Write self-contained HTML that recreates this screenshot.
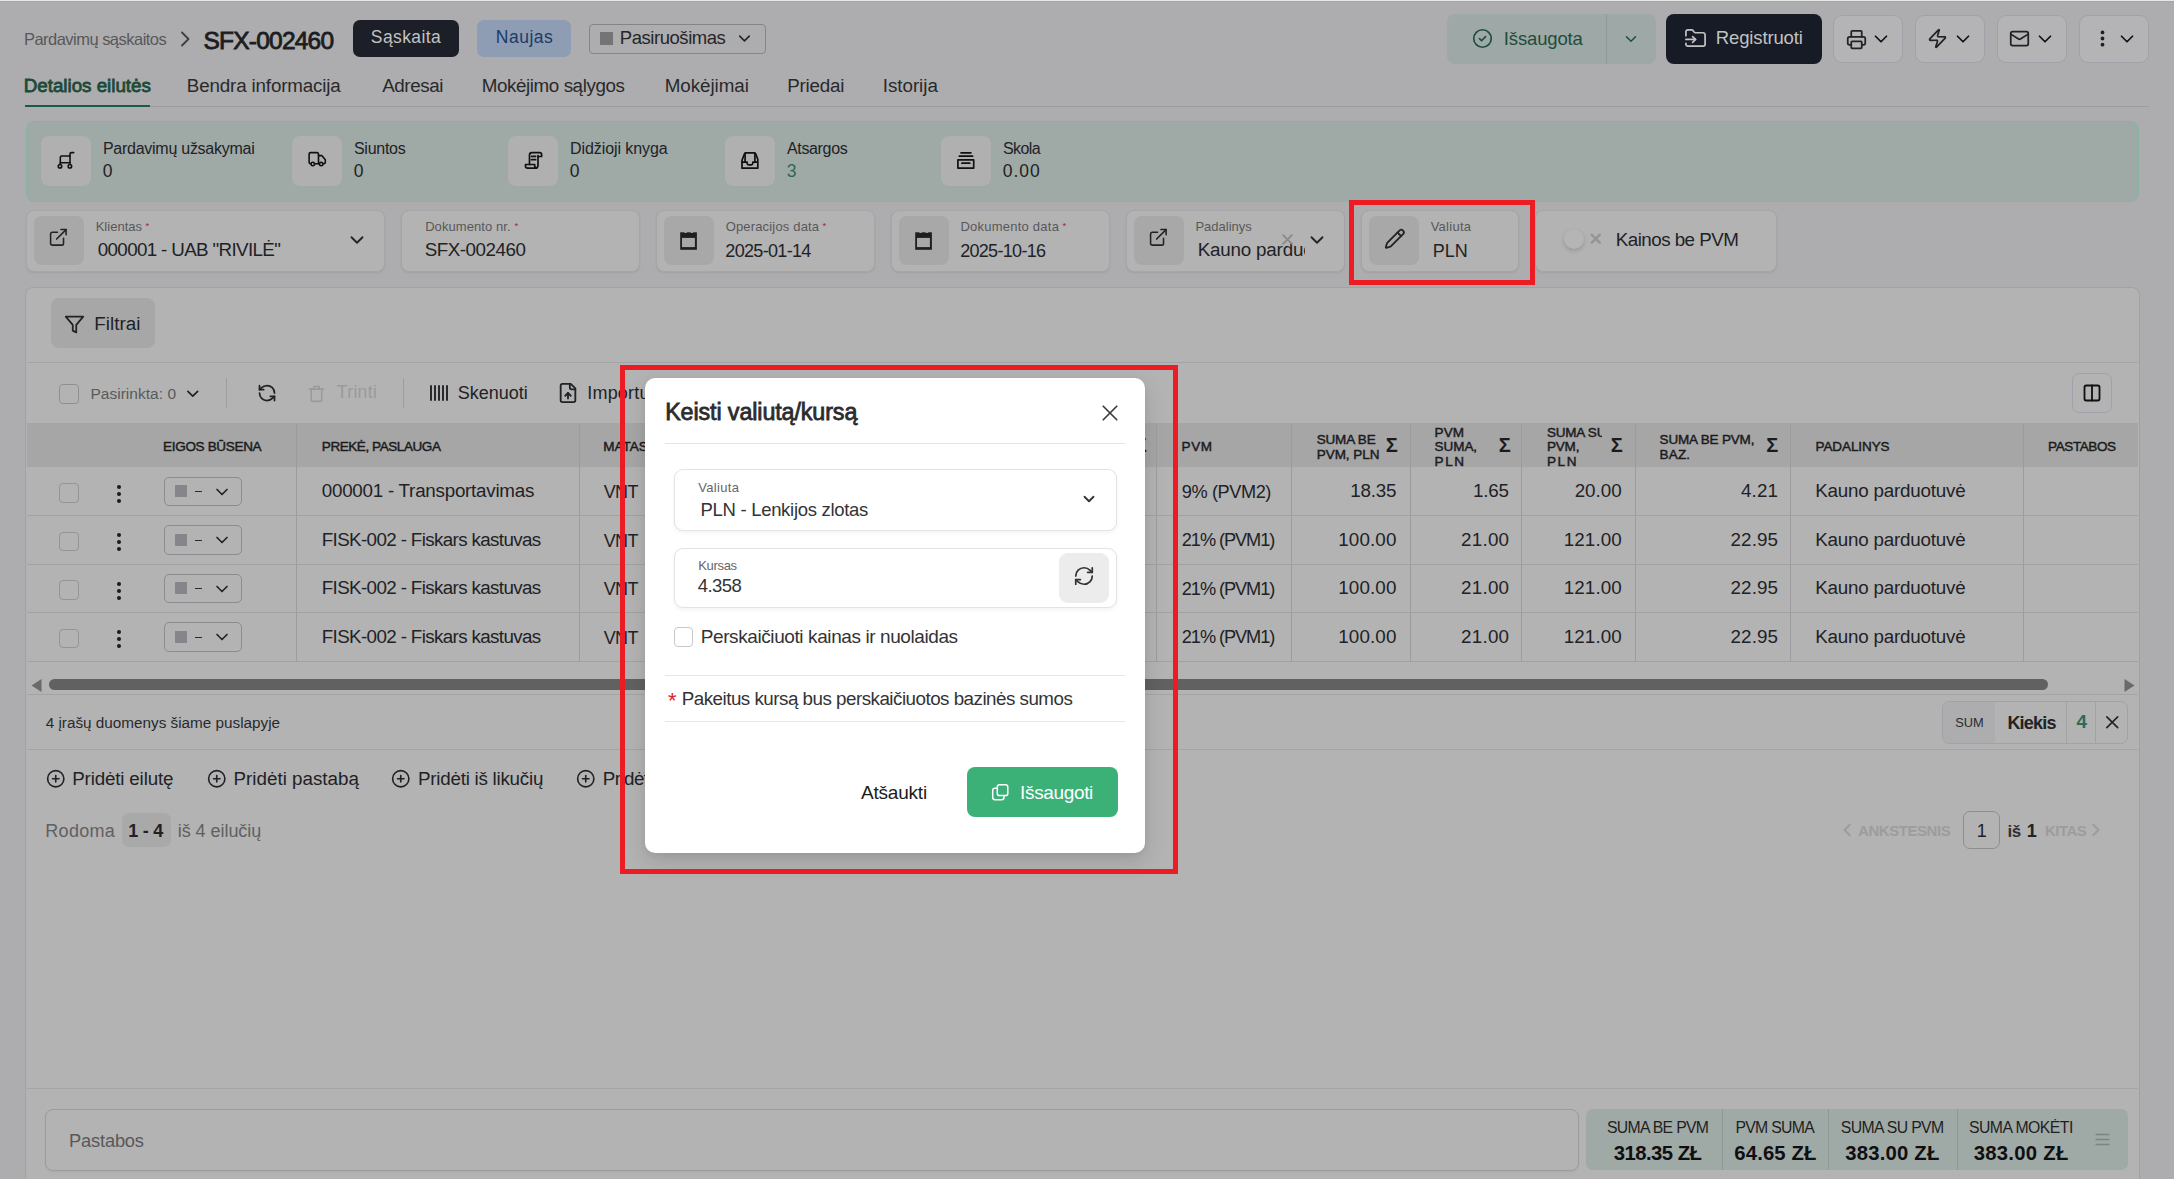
<!DOCTYPE html>
<html><head><meta charset="utf-8"><title>Rivilė</title>
<style>
html,body{margin:0;padding:0;width:2174px;height:1179px;overflow:hidden;background:#adadaf;}
body{position:relative;font-family:"Liberation Sans",sans-serif;}
.a{position:absolute;}
.t{white-space:nowrap;}
svg.a{overflow:visible;}
</style></head><body>
<div class="a" style="left:0px;top:0px;width:2174px;height:1px;background:#e6e8e6;"></div>
<div class="a" style="left:0px;top:1px;width:2174px;height:1px;background:#a6a6a8;"></div>
<span class="a t" id="t0" style="top:31.13px;font-size:16.5px;line-height:16.5px;color:#58585a;letter-spacing:-0.523px;left:23.93px;">Pardavimų sąskaitos</span>
<svg class="a" style="left:176.5px;top:30.5px;" width="16" height="16" viewBox="0 0 16 16" fill="none" stroke="#3e3e40" stroke-width="1.8" stroke-linecap="round" stroke-linejoin="round"><path d="M5 1.5 11.5 8 5 14.5"/></svg>
<span class="a t" id="t1" style="top:29.36px;font-size:24.5px;line-height:24.5px;color:#1d1d1f;letter-spacing:-0.763px;left:203.41px;-webkit-text-stroke:0.85px #1d1d1f;">SFX-002460</span>
<div class="a" style="left:353px;top:20px;width:106px;height:36.5px;background:#1c1f27;border-radius:7px;"></div>
<span class="a t" id="t2" style="top:29.48px;font-size:17.5px;line-height:17.5px;color:#c2c2c2;letter-spacing:0.400px;left:370.86px;">Sąskaita</span>
<div class="a" style="left:477px;top:20px;width:94px;height:36.5px;background:#8e9db4;border-radius:7px;"></div>
<span class="a t" id="t3" style="top:29.48px;font-size:17.5px;line-height:17.5px;color:#1d3a68;letter-spacing:0.488px;left:495.86px;">Naujas</span>
<div class="a" style="left:589px;top:24px;width:177px;height:29.5px;border:1px solid #858587;box-sizing:border-box;border-radius:4px;"></div>
<div class="a" style="left:600px;top:32px;width:13px;height:13px;background:#747476;"></div>
<span class="a t" id="t4" style="top:28.64px;font-size:18.5px;line-height:18.5px;color:#262628;letter-spacing:-0.456px;left:619.80px;">Pasiruošimas</span>
<svg class="a" style="left:735px;top:29px;" width="19" height="19" viewBox="0 0 24 24" fill="none" stroke="#262628" stroke-width="2" stroke-linecap="round" stroke-linejoin="round"><path d="m6 9 6 6 6-6"/></svg>
<div class="a" style="left:1447px;top:14px;width:209px;height:49.5px;background:#9ea8a6;border-radius:8px;"></div>
<div class="a" style="left:1606px;top:14px;width:1px;height:49.5px;background:#8f9a97;"></div>
<svg class="a" style="left:1472px;top:28px;" width="21" height="21" viewBox="0 0 24 24" fill="none" stroke="#1f4d3c" stroke-width="1.9" stroke-linecap="round" stroke-linejoin="round"><circle cx="12" cy="12" r="10"/><path d="m8.5 12.2 2.4 2.4 4.6-4.8"/></svg>
<span class="a t" id="t5" style="top:29.84px;font-size:18.5px;line-height:18.5px;color:#1f4d3c;letter-spacing:-0.150px;left:1503.80px;">Išsaugota</span>
<svg class="a" style="left:1622px;top:30px;" width="18" height="18" viewBox="0 0 24 24" fill="none" stroke="#1f4d3c" stroke-width="2" stroke-linecap="round" stroke-linejoin="round"><path d="m6 9 6 6 6-6"/></svg>
<div class="a" style="left:1666px;top:14px;width:156px;height:49.5px;background:#161b26;border-radius:8px;"></div>
<svg class="a" style="left:1684px;top:27px;" width="23" height="23" viewBox="0 0 24 24" fill="none" stroke="#c2c2c2" stroke-width="1.8" stroke-linecap="round" stroke-linejoin="round"><path d="M2 9V5a2 2 0 0 1 2-2h3.9a2 2 0 0 1 1.69.9l.81 1.2a2 2 0 0 0 1.67.9H20a2 2 0 0 1 2 2v10a2 2 0 0 1-2 2H4a2 2 0 0 1-2-2v-1"/><path d="M2 13h10"/><path d="m9 16 3-3-3-3"/></svg>
<span class="a t" id="t6" style="top:29.44px;font-size:18.5px;line-height:18.5px;color:#c2c2c2;letter-spacing:-0.140px;left:1715.80px;">Registruoti</span>
<div class="a" style="left:1833px;top:14.5px;width:70px;height:48.5px;background:#b4b4b6;border:1px solid #9fa2a8;box-sizing:border-box;border-radius:9px;"></div>
<svg class="a" style="left:1870px;top:27.7px;" width="22" height="22" viewBox="0 0 24 24" fill="none" stroke="#111113" stroke-width="1.9" stroke-linecap="round" stroke-linejoin="round"><path d="m6 9 6 6 6-6"/></svg>
<div class="a" style="left:1915px;top:14.5px;width:70px;height:48.5px;background:#b4b4b6;border:1px solid #9fa2a8;box-sizing:border-box;border-radius:9px;"></div>
<svg class="a" style="left:1952px;top:27.7px;" width="22" height="22" viewBox="0 0 24 24" fill="none" stroke="#111113" stroke-width="1.9" stroke-linecap="round" stroke-linejoin="round"><path d="m6 9 6 6 6-6"/></svg>
<div class="a" style="left:1997px;top:14.5px;width:70px;height:48.5px;background:#b4b4b6;border:1px solid #9fa2a8;box-sizing:border-box;border-radius:9px;"></div>
<svg class="a" style="left:2034px;top:27.7px;" width="22" height="22" viewBox="0 0 24 24" fill="none" stroke="#111113" stroke-width="1.9" stroke-linecap="round" stroke-linejoin="round"><path d="m6 9 6 6 6-6"/></svg>
<div class="a" style="left:2079px;top:14.5px;width:70px;height:48.5px;background:#b4b4b6;border:1px solid #9fa2a8;box-sizing:border-box;border-radius:9px;"></div>
<svg class="a" style="left:2116px;top:27.7px;" width="22" height="22" viewBox="0 0 24 24" fill="none" stroke="#111113" stroke-width="1.9" stroke-linecap="round" stroke-linejoin="round"><path d="m6 9 6 6 6-6"/></svg>
<svg class="a" style="left:1845.5px;top:29px;" width="21" height="21" viewBox="0 0 24 24" fill="none" stroke="#212226" stroke-width="2" stroke-linecap="round" stroke-linejoin="round"><path d="M6 18H4a2 2 0 0 1-2-2v-5a2 2 0 0 1 2-2h16a2 2 0 0 1 2 2v5a2 2 0 0 1-2 2h-2"/><path d="M6 9V3a1 1 0 0 1 1-1h10a1 1 0 0 1 1 1v6"/><rect x="6" y="14" width="12" height="8" rx="1"/></svg>
<svg class="a" style="left:1927px;top:28px;" width="21" height="21" viewBox="0 0 24 24" fill="none" stroke="#212226" stroke-width="2" stroke-linecap="round" stroke-linejoin="round"><path d="M4 14a1 1 0 0 1-.78-1.63l9.9-10.2a.5.5 0 0 1 .86.46l-1.92 6.02A1 1 0 0 0 13 10h7a1 1 0 0 1 .78 1.63l-9.9 10.2a.5.5 0 0 1-.86-.46l1.92-6.02A1 1 0 0 0 11 14z"/></svg>
<svg class="a" style="left:2009px;top:28px;" width="21" height="21" viewBox="0 0 24 24" fill="none" stroke="#212226" stroke-width="2" stroke-linecap="round" stroke-linejoin="round"><rect width="20" height="16" x="2" y="4" rx="2"/><path d="m22 7-8.97 5.7a1.94 1.94 0 0 1-2.06 0L2 7"/></svg>
<svg class="a" style="left:2092px;top:28px;" width="21" height="21" viewBox="0 0 24 24" fill="none" stroke="#212226" stroke-width="2" stroke-linecap="round" stroke-linejoin="round"><circle cx="12" cy="5" r="1.2" fill="#1b1b1d"/><circle cx="12" cy="12" r="1.2" fill="#1b1b1d"/><circle cx="12" cy="19" r="1.2" fill="#1b1b1d"/></svg>
<div class="a" style="left:25px;top:106px;width:2124px;height:1px;background:#9c9c9e;"></div>
<div class="a" style="left:25px;top:104.8px;width:125px;height:2.2px;background:#1e5a42;"></div>
<span class="a t" id="t7" style="top:76.98px;font-size:18.8px;line-height:18.8px;color:#1c4a37;letter-spacing:-0.020px;left:23.78px;-webkit-text-stroke:0.8px #1c4a37;">Detalios eilutės</span>
<span class="a t" id="t8" style="top:76.98px;font-size:18.8px;line-height:18.8px;color:#29292b;letter-spacing:-0.149px;left:186.78px;">Bendra informacija</span>
<span class="a t" id="t9" style="top:76.98px;font-size:18.8px;line-height:18.8px;color:#29292b;letter-spacing:-0.437px;left:382.28px;">Adresai</span>
<span class="a t" id="t10" style="top:76.98px;font-size:18.8px;line-height:18.8px;color:#29292b;letter-spacing:-0.413px;left:481.78px;">Mokėjimo sąlygos</span>
<span class="a t" id="t11" style="top:76.98px;font-size:18.8px;line-height:18.8px;color:#29292b;letter-spacing:-0.060px;left:664.78px;">Mokėjimai</span>
<span class="a t" id="t12" style="top:76.98px;font-size:18.8px;line-height:18.8px;color:#29292b;letter-spacing:-0.233px;left:787.28px;">Priedai</span>
<span class="a t" id="t13" style="top:76.98px;font-size:18.8px;line-height:18.8px;color:#29292b;letter-spacing:-0.037px;left:882.78px;">Istorija</span>
<div class="a" style="left:25.5px;top:120.5px;width:2113.5px;height:81px;background:#9fa9a6;border:1px solid #88b3a2;box-sizing:border-box;border-radius:8px;"></div>
<div class="a" style="left:41px;top:136px;width:50px;height:50px;background:#b0b0b0;border-radius:8px;"></div>
<span class="a t" id="t14" style="top:140.85px;font-size:16px;line-height:16px;color:#212226;letter-spacing:-0.263px;left:102.96px;">Pardavimų užsakymai</span>
<span class="a t" id="t15" style="top:162.68px;font-size:17.5px;line-height:17.5px;color:#212226;left:102.86px;">0</span>
<div class="a" style="left:292px;top:136px;width:50px;height:50px;background:#b0b0b0;border-radius:8px;"></div>
<span class="a t" id="t16" style="top:140.85px;font-size:16px;line-height:16px;color:#212226;letter-spacing:-0.269px;left:353.96px;">Siuntos</span>
<span class="a t" id="t17" style="top:162.68px;font-size:17.5px;line-height:17.5px;color:#212226;left:353.86px;">0</span>
<div class="a" style="left:508px;top:136px;width:50px;height:50px;background:#b0b0b0;border-radius:8px;"></div>
<span class="a t" id="t18" style="top:140.85px;font-size:16px;line-height:16px;color:#212226;letter-spacing:-0.074px;left:569.96px;">Didžioji knyga</span>
<span class="a t" id="t19" style="top:162.68px;font-size:17.5px;line-height:17.5px;color:#212226;left:569.86px;">0</span>
<div class="a" style="left:725px;top:136px;width:50px;height:50px;background:#b0b0b0;border-radius:8px;"></div>
<span class="a t" id="t20" style="top:140.85px;font-size:16px;line-height:16px;color:#212226;letter-spacing:-0.340px;left:786.96px;">Atsargos</span>
<span class="a t" id="t21" style="top:162.68px;font-size:17.5px;line-height:17.5px;color:#2b6b58;left:786.86px;">3</span>
<div class="a" style="left:941px;top:136px;width:50px;height:50px;background:#b0b0b0;border-radius:8px;"></div>
<span class="a t" id="t22" style="top:140.85px;font-size:16px;line-height:16px;color:#212226;letter-spacing:-0.568px;left:1002.96px;">Skola</span>
<span class="a t" id="t23" style="top:162.68px;font-size:17.5px;line-height:17.5px;color:#212226;letter-spacing:0.954px;left:1002.86px;">0.00</span>
<svg class="a" style="left:41px;top:136px;" width="50" height="50" viewBox="0 0 50 50" fill="none" stroke="#111113" stroke-width="1.6" stroke-linecap="round" stroke-linejoin="round"><path d="M32.7 16.6h-2.2a1.5 1.5 0 0 0-1.5 1.5V27.2"/><path d="M29 20H20.8a1.5 1.5 0 0 0-1.5 1.5V28.3"/><path d="M19.3 26.7H29"/><circle cx="19" cy="30.2" r="1.75"/><circle cx="28.9" cy="30.2" r="1.75"/></svg>
<svg class="a" style="left:292px;top:136px;" width="50" height="50" viewBox="0 0 50 50" fill="none" stroke="#111113" stroke-width="1.6" stroke-linecap="round" stroke-linejoin="round"><path d="M19 27.8h-0.4a1.5 1.5 0 0 1-1.5-1.5V18.2a1.6 1.6 0 0 1 1.6-1.6h6.3a1.5 1.5 0 0 1 1.5 1.5V27.8h0.8"/><path d="M22.6 27.8h4.9"/><path d="M26.5 19.6h3.3l3.5 4.2v2.6a1.5 1.5 0 0 1-1.4 1.4h-1"/><circle cx="20.8" cy="28" r="1.7"/><circle cx="29.2" cy="28" r="1.7"/></svg>
<svg class="a" style="left:508px;top:136px;" width="50" height="50" viewBox="0 0 50 50" fill="none" stroke="#111113" stroke-width="1.7" stroke-linecap="round" stroke-linejoin="round"><path d="M21.5 28.5V19a2.4 2.4 0 0 1 2.4-2.4H32a1.6 1.6 0 0 1 1.6 1.6v2.3H30.2"/><path d="M30 19.5v10.2a2.4 2.4 0 0 1-2.4 2.4H19.6a2.1 2.1 0 0 1-2.1-2.1v-1.5h9.2v1.2a2.3 2.3 0 0 0 2.2 2.4"/><path d="M23.6 20.3h4"/><path d="M23.6 23.7h4"/></svg>
<svg class="a" style="left:725px;top:136px;" width="50" height="50" viewBox="0 0 50 50" fill="none" stroke="#111113" stroke-width="1.7" stroke-linecap="round" stroke-linejoin="round"><path d="M17 32.2V24.2l2.5-6.3a1.6 1.6 0 0 1 1.5-1.1h8.2a1.6 1.6 0 0 1 1.5 1.1l2.1 5.3V32.2Z"/><path d="M20.1 17.2v9H17"/><path d="M29.9 17.2v9h2.4"/><path d="M20.1 26.2h2v1.1a1.6 1.6 0 0 0 1.6 1.6h2.5a1.6 1.6 0 0 0 1.6-1.6v-1.1h2.1"/></svg>
<svg class="a" style="left:941px;top:136px;" width="50" height="50" viewBox="0 0 50 50" fill="none" stroke="#111113" stroke-width="1.7" stroke-linecap="round" stroke-linejoin="round"><path d="M20 16.8h9.9"/><path d="M18.3 20.2h13.3"/><rect x="16.9" y="23.9" width="15.8" height="8.2"/><path d="M20.9 27.2h7.9"/></svg>
<div class="a" style="left:25.5px;top:209.5px;width:359px;height:62px;background:#b3b3b3;border:1px solid #a6a6a8;box-sizing:border-box;border-radius:8px;box-shadow:0 1px 2px rgba(0,0,0,0.08);"></div>
<div class="a" style="left:34px;top:215.5px;width:50px;height:49px;background:#a8a8a8;border-radius:8px;"></div>
<svg class="a" style="left:48.4px;top:227.4px;" width="20.7" height="20.7" viewBox="0 0 24 24" fill="none" stroke="#222224" stroke-width="1.8" stroke-linecap="round" stroke-linejoin="round"><path d="M15 3h6v6"/><path d="M10 14 21 3"/><path d="M18 13v6a2 2 0 0 1-2 2H5a2 2 0 0 1-2-2V8a2 2 0 0 1 2-2h6"/></svg>
<span class="a t" id="t24" style="top:220.09px;font-size:13px;line-height:13px;color:#58585a;letter-spacing:0.026px;left:95.66px;">Klientas</span>
<span class="a t" id="t25" style="top:220.86px;font-size:9.5px;line-height:9.5px;color:#a8233f;left:145.38px;">*</span>
<span class="a t" id="t26" style="top:240.98px;font-size:18.8px;line-height:18.8px;color:#212226;letter-spacing:-0.648px;left:97.78px;">000001 - UAB "RIVILĖ"</span>
<svg class="a" style="left:345.5px;top:229.3px;" width="22" height="22" viewBox="0 0 24 24" fill="none" stroke="#212226" stroke-width="2" stroke-linecap="round" stroke-linejoin="round"><path d="m6 9 6 6 6-6"/></svg>
<div class="a" style="left:400.5px;top:209.5px;width:239px;height:62px;background:#b3b3b3;border:1px solid #a6a6a8;box-sizing:border-box;border-radius:8px;box-shadow:0 1px 2px rgba(0,0,0,0.08);"></div>
<span class="a t" id="t27" style="top:220.09px;font-size:13px;line-height:13px;color:#58585a;letter-spacing:0.074px;left:425.15px;">Dokumento nr.</span>
<span class="a t" id="t28" style="top:220.86px;font-size:9.5px;line-height:9.5px;color:#a8233f;left:514.38px;">*</span>
<span class="a t" id="t29" style="top:240.98px;font-size:18.8px;line-height:18.8px;color:#212226;letter-spacing:-0.487px;left:424.78px;">SFX-002460</span>
<div class="a" style="left:655.5px;top:209.5px;width:219px;height:62px;background:#b3b3b3;border:1px solid #a6a6a8;box-sizing:border-box;border-radius:8px;box-shadow:0 1px 2px rgba(0,0,0,0.08);"></div>
<div class="a" style="left:664px;top:215.5px;width:50px;height:49px;background:#a8a8a8;border-radius:8px;"></div>
<svg class="a" style="left:664px;top:215.5px;" width="50" height="50" viewBox="0 0 50 50" fill="none" stroke="none" stroke-width="0" stroke-linecap="round" stroke-linejoin="round"><rect x="16.2" y="16.3" width="16.7" height="17.5" fill="#1e1f22" stroke="none"/><rect x="18" y="21.9" width="12.9" height="9.2" fill="#a8a8a8" stroke="none"/><rect x="20.4" y="16.1" width="2.4" height="0.9" fill="#a8a8a8" stroke="none"/><rect x="26.6" y="16.1" width="2.5" height="0.9" fill="#a8a8a8" stroke="none"/></svg>
<span class="a t" id="t30" style="top:220.09px;font-size:13px;line-height:13px;color:#58585a;letter-spacing:0.169px;left:725.65px;">Operacijos data</span>
<span class="a t" id="t31" style="top:220.86px;font-size:9.5px;line-height:9.5px;color:#a8233f;left:822.38px;">*</span>
<span class="a t" id="t32" style="top:241.66px;font-size:18px;line-height:18px;color:#212226;letter-spacing:-0.678px;left:725.33px;">2025-01-14</span>
<div class="a" style="left:890.5px;top:209.5px;width:219px;height:62px;background:#b3b3b3;border:1px solid #a6a6a8;box-sizing:border-box;border-radius:8px;box-shadow:0 1px 2px rgba(0,0,0,0.08);"></div>
<div class="a" style="left:899px;top:215.5px;width:50px;height:49px;background:#a8a8a8;border-radius:8px;"></div>
<svg class="a" style="left:899px;top:215.5px;" width="50" height="50" viewBox="0 0 50 50" fill="none" stroke="none" stroke-width="0" stroke-linecap="round" stroke-linejoin="round"><rect x="16.2" y="16.3" width="16.7" height="17.5" fill="#1e1f22" stroke="none"/><rect x="18" y="21.9" width="12.9" height="9.2" fill="#a8a8a8" stroke="none"/><rect x="20.4" y="16.1" width="2.4" height="0.9" fill="#a8a8a8" stroke="none"/><rect x="26.6" y="16.1" width="2.5" height="0.9" fill="#a8a8a8" stroke="none"/></svg>
<span class="a t" id="t33" style="top:220.09px;font-size:13px;line-height:13px;color:#58585a;letter-spacing:0.233px;left:960.45px;">Dokumento data</span>
<span class="a t" id="t34" style="top:220.86px;font-size:9.5px;line-height:9.5px;color:#a8233f;left:1062.38px;">*</span>
<span class="a t" id="t35" style="top:241.66px;font-size:18px;line-height:18px;color:#212226;letter-spacing:-0.678px;left:960.13px;">2025-10-16</span>
<div class="a" style="left:1125.5px;top:209.5px;width:219px;height:62px;background:#b3b3b3;border:1px solid #a6a6a8;box-sizing:border-box;border-radius:8px;box-shadow:0 1px 2px rgba(0,0,0,0.08);"></div>
<div class="a" style="left:1134px;top:215.5px;width:50px;height:49px;background:#a8a8a8;border-radius:8px;"></div>
<svg class="a" style="left:1148.4px;top:227.4px;" width="20.7" height="20.7" viewBox="0 0 24 24" fill="none" stroke="#222224" stroke-width="1.8" stroke-linecap="round" stroke-linejoin="round"><path d="M15 3h6v6"/><path d="M10 14 21 3"/><path d="M18 13v6a2 2 0 0 1-2 2H5a2 2 0 0 1-2-2V8a2 2 0 0 1 2-2h6"/></svg>
<span class="a t" id="t36" style="top:220.09px;font-size:13px;line-height:13px;color:#58585a;letter-spacing:0.007px;left:1195.45px;">Padalinys</span>
<div class="a" style="left:1196px;top:230.98px;width:109px;height:38.8px;overflow:hidden"><span class="a t" id="t37" style="top:10px;font-size:18.8px;line-height:18.8px;color:#212226;letter-spacing:-0.197px;left:1.78px;">Kauno parduotuvė</span></div>
<svg class="a" style="left:1280px;top:232px;" width="15" height="15" viewBox="0 0 24 24" fill="none" stroke="#8a8a8c" stroke-width="3" stroke-linecap="round" stroke-linejoin="round"><path d="M5 5l14 14M19 5 5 19"/></svg>
<svg class="a" style="left:1305.5px;top:229.3px;" width="22" height="22" viewBox="0 0 24 24" fill="none" stroke="#212226" stroke-width="2" stroke-linecap="round" stroke-linejoin="round"><path d="m6 9 6 6 6-6"/></svg>
<div class="a" style="left:1360.5px;top:209.5px;width:158px;height:62px;background:#b3b3b3;border:1px solid #a6a6a8;box-sizing:border-box;border-radius:8px;box-shadow:0 1px 2px rgba(0,0,0,0.08);"></div>
<div class="a" style="left:1369px;top:215.5px;width:50px;height:49px;background:#a8a8a8;border-radius:8px;"></div>
<svg class="a" style="left:1383.7px;top:227.7px;" width="21.6" height="21.6" viewBox="0 0 24 24" fill="none" stroke="#212226" stroke-width="2" stroke-linecap="round" stroke-linejoin="round"><path d="M21.17 6.81a1 1 0 0 0-3.99-3.99L3.84 16.17a2 2 0 0 0-.5.83l-1.32 4.35a.5.5 0 0 0 .62.62l4.35-1.32a2 2 0 0 0 .83-.5z"/><path d="m15 5 4 4"/></svg>
<span class="a t" id="t38" style="top:220.09px;font-size:13px;line-height:13px;color:#58585a;letter-spacing:0.272px;left:1430.65px;">Valiuta</span>
<span class="a t" id="t39" style="top:241.66px;font-size:18px;line-height:18px;color:#212226;letter-spacing:-0.018px;left:1432.83px;">PLN</span>
<div class="a" style="left:1534.5px;top:209.5px;width:242px;height:62px;background:#b3b3b3;border:1px solid #a6a6a8;box-sizing:border-box;border-radius:8px;box-shadow:0 1px 2px rgba(0,0,0,0.08);"></div>
<div class="a" style="left:1564.2px;top:229.3px;width:20px;height:20px;border-radius:50%;background:#b5b5b5;box-shadow:0 2px 4px rgba(0,0,0,0.16)"></div>
<svg class="a" style="left:1588.8px;top:231.8px;" width="13.5" height="13.5" viewBox="0 0 24 24" fill="none" stroke="#959597" stroke-width="4.6" stroke-linecap="round" stroke-linejoin="round"><path d="M5 5l14 14M19 5 5 19"/></svg>
<span class="a t" id="t40" style="top:231.38px;font-size:18.8px;line-height:18.8px;color:#212226;letter-spacing:-0.532px;left:1615.78px;">Kainos be PVM</span>
<div class="a" style="left:25px;top:287px;width:2115px;height:1000px;background:#b3b3b3;border:1px solid #a2a2a4;box-sizing:border-box;border-radius:8px;"></div>
<div class="a" style="left:51px;top:298px;width:104px;height:49.5px;background:#a7a7a7;border-radius:8px;"></div>
<svg class="a" style="left:64px;top:314px;" width="21" height="21" viewBox="0 0 24 24" fill="none" stroke="#212226" stroke-width="2" stroke-linecap="round" stroke-linejoin="round"><path d="M22 3H2l8 9.46V19l4 2v-8.54L22 3z"/></svg>
<span class="a t" id="t41" style="top:315.28px;font-size:18.8px;line-height:18.8px;color:#212226;letter-spacing:0.024px;left:94.28px;">Filtrai</span>
<div class="a" style="left:27px;top:362px;width:2111px;height:1px;background:#a4a4a6;"></div>
<div class="a" style="left:59px;top:384px;width:20px;height:20px;border:1.5px solid #8f8f91;box-sizing:border-box;border-radius:4px;"></div>
<span class="a t" id="t42" style="top:386.48px;font-size:15.5px;line-height:15.5px;color:#5a5a5c;letter-spacing:0.034px;left:90.39px;">Pasirinkta: 0</span>
<svg class="a" style="left:182.5px;top:383.5px;" width="19.5" height="19.5" viewBox="0 0 24 24" fill="none" stroke="#212226" stroke-width="2.1" stroke-linecap="round" stroke-linejoin="round"><path d="m6 9 6 6 6-6"/></svg>
<div class="a" style="left:226px;top:378px;width:1px;height:30px;background:#9d9d9f;"></div>
<svg class="a" style="left:257px;top:383px;" width="20" height="20" viewBox="0 0 24 24" fill="none" stroke="#212226" stroke-width="2.1" stroke-linecap="round" stroke-linejoin="round"><path d="M21 12a9 9 0 0 0-9-9 9.75 9.75 0 0 0-6.74 2.74L3 8"/><path d="M3 3v5h5"/><path d="M3 12a9 9 0 0 0 9 9 9.75 9.75 0 0 0 6.74-2.74L21 16"/><path d="M16 16h5v5"/></svg>
<svg class="a" style="left:306px;top:383px;" width="21" height="21" viewBox="0 0 24 24" fill="none" stroke="#9a9a9c" stroke-width="1.8" stroke-linecap="round" stroke-linejoin="round"><path d="M4 7h16"/><path d="M6 7v13a1 1 0 0 0 1 1h10a1 1 0 0 0 1-1V7"/><path d="M9 7V4h6v3"/></svg>
<span class="a t" id="t43" style="top:384.08px;font-size:17.5px;line-height:17.5px;color:#9a9a9c;letter-spacing:0.335px;left:336.86px;">Trinti</span>
<div class="a" style="left:403px;top:378px;width:1px;height:30px;background:#9d9d9f;"></div>
<svg class="a" style="left:429px;top:385px;" width="20" height="16" viewBox="0 0 20 16" fill="none" stroke="#212226" stroke-width="1.9" stroke-linecap="round" stroke-linejoin="round"><path d="M2 1v14M6 1v14M10 1v14M14 1v14M18 1v14"/></svg>
<span class="a t" id="t44" style="top:383.66px;font-size:18px;line-height:18px;color:#212226;letter-spacing:-0.012px;left:457.83px;">Skenuoti</span>
<svg class="a" style="left:556px;top:382px;" width="24" height="22" viewBox="0 0 24 24" fill="none" stroke="#212226" stroke-width="2" stroke-linecap="round" stroke-linejoin="round"><path d="M15 2H6a2 2 0 0 0-2 2v16a2 2 0 0 0 2 2h12a2 2 0 0 0 2-2V7Z"/><path d="M14 2v4a2 2 0 0 0 2 2h4"/><path d="M12 12v6"/><path d="m15 15-3-3-3 3"/></svg>
<span class="a t" id="t45" style="top:383.66px;font-size:18px;line-height:18px;color:#212226;letter-spacing:0.215px;left:587.23px;">Importuoti</span>
<div class="a" style="left:2072px;top:373px;width:40px;height:40px;border:1px solid #9ea2aa;box-sizing:border-box;border-radius:7px;"></div>
<svg class="a" style="left:2082px;top:383px;" width="20" height="20" viewBox="0 0 24 24" fill="none" stroke="#111113" stroke-width="2.2" stroke-linecap="round" stroke-linejoin="round"><rect width="18" height="18" x="3" y="3" rx="2"/><path d="M12 3v18"/></svg>
<div class="a" style="left:27px;top:423px;width:2111px;height:44px;background:#a6a6a6;"></div>
<div class="a" style="left:296px;top:423px;width:1px;height:238px;background:#9c9c9e;"></div>
<div class="a" style="left:579px;top:423px;width:1px;height:238px;background:#9c9c9e;"></div>
<div class="a" style="left:1156px;top:423px;width:1px;height:238px;background:#9c9c9e;"></div>
<div class="a" style="left:1291px;top:423px;width:1px;height:238px;background:#9c9c9e;"></div>
<div class="a" style="left:1409.5px;top:423px;width:1px;height:238px;background:#9c9c9e;"></div>
<div class="a" style="left:1521px;top:423px;width:1px;height:238px;background:#9c9c9e;"></div>
<div class="a" style="left:1634.5px;top:423px;width:1px;height:238px;background:#9c9c9e;"></div>
<div class="a" style="left:1790px;top:423px;width:1px;height:238px;background:#9c9c9e;"></div>
<div class="a" style="left:2023px;top:423px;width:1px;height:238px;background:#9c9c9e;"></div>
<span class="a t" id="t46" style="top:439.87px;font-size:13.5px;line-height:13.5px;color:#1b1b1d;letter-spacing:-0.322px;left:163.12px;-webkit-text-stroke:0.45px #1b1b1d;">EIGOS BŪSENA</span>
<span class="a t" id="t47" style="top:439.87px;font-size:13.5px;line-height:13.5px;color:#1b1b1d;letter-spacing:-0.426px;left:321.82px;-webkit-text-stroke:0.45px #1b1b1d;">PREKĖ, PASLAUGA</span>
<span class="a t" id="t48" style="top:439.87px;font-size:13.5px;line-height:13.5px;color:#1b1b1d;left:603.32px;-webkit-text-stroke:0.45px #1b1b1d;">MATAS</span>
<span class="a t" id="t49" style="top:439.97px;font-size:13.5px;line-height:13.5px;color:#1b1b1d;letter-spacing:0.610px;left:1181.62px;-webkit-text-stroke:0.45px #1b1b1d;">PVM</span>
<span class="a t" id="t50" style="top:433.07px;font-size:13.5px;line-height:13.5px;color:#1b1b1d;letter-spacing:-0.174px;left:1316.72px;-webkit-text-stroke:0.45px #1b1b1d;">SUMA BE</span>
<span class="a t" id="t51" style="top:447.67px;font-size:13.5px;line-height:13.5px;color:#1b1b1d;letter-spacing:-0.049px;left:1316.72px;-webkit-text-stroke:0.45px #1b1b1d;">PVM, PLN</span>
<span class="a t" id="t52" style="top:425.97px;font-size:13.5px;line-height:13.5px;color:#1b1b1d;letter-spacing:0.110px;left:1434.62px;-webkit-text-stroke:0.45px #1b1b1d;">PVM</span>
<span class="a t" id="t53" style="top:440.47px;font-size:13.5px;line-height:13.5px;color:#1b1b1d;letter-spacing:-0.070px;left:1434.62px;-webkit-text-stroke:0.45px #1b1b1d;">SUMA,</span>
<span class="a t" id="t54" style="top:454.67px;font-size:13.5px;line-height:13.5px;color:#1b1b1d;letter-spacing:1.610px;left:1434.62px;-webkit-text-stroke:0.45px #1b1b1d;">PLN</span>
<div class="a" style="left:1540px;top:415.97px;width:62px;height:33.5px;overflow:hidden"><span class="a t" id="t55" style="top:10px;font-size:13.5px;line-height:13.5px;color:#1b1b1d;letter-spacing:-0.213px;left:6.92px;-webkit-text-stroke:0.45px #1b1b1d;">SUMA SU</span></div>
<span class="a t" id="t56" style="top:440.47px;font-size:13.5px;line-height:13.5px;color:#1b1b1d;letter-spacing:-0.177px;left:1546.92px;-webkit-text-stroke:0.45px #1b1b1d;">PVM,</span>
<span class="a t" id="t57" style="top:454.67px;font-size:13.5px;line-height:13.5px;color:#1b1b1d;letter-spacing:1.610px;left:1546.92px;-webkit-text-stroke:0.45px #1b1b1d;">PLN</span>
<span class="a t" id="t58" style="top:433.17px;font-size:13.5px;line-height:13.5px;color:#1b1b1d;letter-spacing:-0.181px;left:1659.62px;-webkit-text-stroke:0.45px #1b1b1d;">SUMA BE PVM,</span>
<span class="a t" id="t59" style="top:448.17px;font-size:13.5px;line-height:13.5px;color:#1b1b1d;letter-spacing:0.156px;left:1659.62px;-webkit-text-stroke:0.45px #1b1b1d;">BAZ.</span>
<span class="a t" id="t60" style="top:439.87px;font-size:13.5px;line-height:13.5px;color:#1b1b1d;letter-spacing:-0.087px;left:1815.52px;-webkit-text-stroke:0.45px #1b1b1d;">PADALINYS</span>
<span class="a t" id="t61" style="top:439.87px;font-size:13.5px;line-height:13.5px;color:#1b1b1d;letter-spacing:-0.399px;left:2048.12px;-webkit-text-stroke:0.45px #1b1b1d;">PASTABOS</span>
<span class="a t" id="t62" style="top:435.47px;font-size:20px;line-height:20px;color:#1b1b1d;font-weight:700;left:1385.70px;">Σ</span>
<span class="a t" id="t63" style="top:435.47px;font-size:20px;line-height:20px;color:#1b1b1d;font-weight:700;left:1498.70px;">Σ</span>
<span class="a t" id="t64" style="top:435.47px;font-size:20px;line-height:20px;color:#1b1b1d;font-weight:700;left:1610.70px;">Σ</span>
<span class="a t" id="t65" style="top:435.47px;font-size:20px;line-height:20px;color:#1b1b1d;font-weight:700;left:1766.30px;">Σ</span>
<span class="a t" id="t66" style="top:435.47px;font-size:20px;line-height:20px;color:#1b1b1d;font-weight:700;left:1134.70px;">Σ</span>
<div class="a" style="left:27px;top:515px;width:2111px;height:1px;background:#a2a2a4;"></div>
<div class="a" style="left:59.3px;top:483.25px;width:19.5px;height:19.5px;border:1.5px solid #949496;box-sizing:border-box;border-radius:4px;"></div>
<div class="a" style="left:116.6px;top:484.55px;width:4.4px;height:4.4px;border-radius:50%;background:#1b1b1d"></div>
<div class="a" style="left:116.6px;top:491.55px;width:4.4px;height:4.4px;border-radius:50%;background:#1b1b1d"></div>
<div class="a" style="left:116.6px;top:498.55px;width:4.4px;height:4.4px;border-radius:50%;background:#1b1b1d"></div>
<div class="a" style="left:164.4px;top:476.75px;width:78px;height:29.5px;border:1.5px solid #8b8b90;box-sizing:border-box;border-radius:5px;"></div>
<div class="a" style="left:175px;top:485.25px;width:12px;height:12px;background:#85858b;"></div>
<div class="a" style="left:195px;top:491.05px;width:7px;height:1.4px;background:#2b2b2d;"></div>
<svg class="a" style="left:212px;top:481.75px;" width="20" height="20" viewBox="0 0 24 24" fill="none" stroke="#212226" stroke-width="2" stroke-linecap="round" stroke-linejoin="round"><path d="m6 9 6 6 6-6"/></svg>
<span class="a t" id="t67" style="top:482.43px;font-size:18.8px;line-height:18.8px;color:#212226;letter-spacing:-0.244px;left:321.78px;">000001 - Transportavimas</span>
<span class="a t" id="t68" style="top:483.11px;font-size:18px;line-height:18px;color:#212226;letter-spacing:-0.510px;left:603.63px;">VNT</span>
<span class="a t" id="t69" style="top:482.94px;font-size:18.2px;line-height:18.2px;color:#212226;letter-spacing:-0.423px;left:1181.82px;">9% (PVM2)</span>
<span class="a t" id="t70" style="top:482.43px;font-size:18.8px;line-height:18.8px;color:#212226;letter-spacing:-0.233px;right:777.90px;">18.35</span>
<span class="a t" id="t71" style="top:482.43px;font-size:18.8px;line-height:18.8px;color:#212226;letter-spacing:-0.165px;right:665.13px;">1.65</span>
<span class="a t" id="t72" style="top:482.43px;font-size:18.8px;line-height:18.8px;color:#212226;letter-spacing:0.017px;right:552.25px;">20.00</span>
<span class="a t" id="t73" style="top:482.43px;font-size:18.8px;line-height:18.8px;color:#212226;letter-spacing:0.169px;right:395.80px;">4.21</span>
<span class="a t" id="t74" style="top:482.43px;font-size:18.8px;line-height:18.8px;color:#212226;letter-spacing:-0.197px;left:1815.18px;">Kauno parduotuvė</span>
<div class="a" style="left:27px;top:563.5px;width:2111px;height:1px;background:#a2a2a4;"></div>
<div class="a" style="left:59.3px;top:531.75px;width:19.5px;height:19.5px;border:1.5px solid #949496;box-sizing:border-box;border-radius:4px;"></div>
<div class="a" style="left:116.6px;top:533.05px;width:4.4px;height:4.4px;border-radius:50%;background:#1b1b1d"></div>
<div class="a" style="left:116.6px;top:540.05px;width:4.4px;height:4.4px;border-radius:50%;background:#1b1b1d"></div>
<div class="a" style="left:116.6px;top:547.05px;width:4.4px;height:4.4px;border-radius:50%;background:#1b1b1d"></div>
<div class="a" style="left:164.4px;top:525.25px;width:78px;height:29.5px;border:1.5px solid #8b8b90;box-sizing:border-box;border-radius:5px;"></div>
<div class="a" style="left:175px;top:533.75px;width:12px;height:12px;background:#85858b;"></div>
<div class="a" style="left:195px;top:539.55px;width:7px;height:1.4px;background:#2b2b2d;"></div>
<svg class="a" style="left:212px;top:530.25px;" width="20" height="20" viewBox="0 0 24 24" fill="none" stroke="#212226" stroke-width="2" stroke-linecap="round" stroke-linejoin="round"><path d="m6 9 6 6 6-6"/></svg>
<span class="a t" id="t75" style="top:530.93px;font-size:18.8px;line-height:18.8px;color:#212226;letter-spacing:-0.632px;left:321.78px;">FISK-002 - Fiskars kastuvas</span>
<span class="a t" id="t76" style="top:531.61px;font-size:18px;line-height:18px;color:#212226;letter-spacing:-0.510px;left:603.63px;">VNT</span>
<span class="a t" id="t77" style="top:531.44px;font-size:18.2px;line-height:18.2px;color:#212226;letter-spacing:-1.067px;left:1181.82px;">21% (PVM1)</span>
<span class="a t" id="t78" style="top:530.93px;font-size:18.8px;line-height:18.8px;color:#212226;letter-spacing:0.123px;right:777.54px;">100.00</span>
<span class="a t" id="t79" style="top:530.93px;font-size:18.8px;line-height:18.8px;color:#212226;letter-spacing:0.267px;right:664.70px;">21.00</span>
<span class="a t" id="t80" style="top:530.93px;font-size:18.8px;line-height:18.8px;color:#212226;letter-spacing:0.123px;right:552.14px;">121.00</span>
<span class="a t" id="t81" style="top:530.93px;font-size:18.8px;line-height:18.8px;color:#212226;letter-spacing:0.142px;right:395.82px;">22.95</span>
<span class="a t" id="t82" style="top:530.93px;font-size:18.8px;line-height:18.8px;color:#212226;letter-spacing:-0.197px;left:1815.18px;">Kauno parduotuvė</span>
<div class="a" style="left:27px;top:612px;width:2111px;height:1px;background:#a2a2a4;"></div>
<div class="a" style="left:59.3px;top:580.25px;width:19.5px;height:19.5px;border:1.5px solid #949496;box-sizing:border-box;border-radius:4px;"></div>
<div class="a" style="left:116.6px;top:581.55px;width:4.4px;height:4.4px;border-radius:50%;background:#1b1b1d"></div>
<div class="a" style="left:116.6px;top:588.55px;width:4.4px;height:4.4px;border-radius:50%;background:#1b1b1d"></div>
<div class="a" style="left:116.6px;top:595.55px;width:4.4px;height:4.4px;border-radius:50%;background:#1b1b1d"></div>
<div class="a" style="left:164.4px;top:573.75px;width:78px;height:29.5px;border:1.5px solid #8b8b90;box-sizing:border-box;border-radius:5px;"></div>
<div class="a" style="left:175px;top:582.25px;width:12px;height:12px;background:#85858b;"></div>
<div class="a" style="left:195px;top:588.05px;width:7px;height:1.4px;background:#2b2b2d;"></div>
<svg class="a" style="left:212px;top:578.75px;" width="20" height="20" viewBox="0 0 24 24" fill="none" stroke="#212226" stroke-width="2" stroke-linecap="round" stroke-linejoin="round"><path d="m6 9 6 6 6-6"/></svg>
<span class="a t" id="t83" style="top:579.43px;font-size:18.8px;line-height:18.8px;color:#212226;letter-spacing:-0.632px;left:321.78px;">FISK-002 - Fiskars kastuvas</span>
<span class="a t" id="t84" style="top:580.11px;font-size:18px;line-height:18px;color:#212226;letter-spacing:-0.510px;left:603.63px;">VNT</span>
<span class="a t" id="t85" style="top:579.94px;font-size:18.2px;line-height:18.2px;color:#212226;letter-spacing:-1.067px;left:1181.82px;">21% (PVM1)</span>
<span class="a t" id="t86" style="top:579.43px;font-size:18.8px;line-height:18.8px;color:#212226;letter-spacing:0.123px;right:777.54px;">100.00</span>
<span class="a t" id="t87" style="top:579.43px;font-size:18.8px;line-height:18.8px;color:#212226;letter-spacing:0.267px;right:664.70px;">21.00</span>
<span class="a t" id="t88" style="top:579.43px;font-size:18.8px;line-height:18.8px;color:#212226;letter-spacing:0.123px;right:552.14px;">121.00</span>
<span class="a t" id="t89" style="top:579.43px;font-size:18.8px;line-height:18.8px;color:#212226;letter-spacing:0.142px;right:395.82px;">22.95</span>
<span class="a t" id="t90" style="top:579.43px;font-size:18.8px;line-height:18.8px;color:#212226;letter-spacing:-0.197px;left:1815.18px;">Kauno parduotuvė</span>
<div class="a" style="left:27px;top:660.5px;width:2111px;height:1px;background:#a2a2a4;"></div>
<div class="a" style="left:59.3px;top:628.75px;width:19.5px;height:19.5px;border:1.5px solid #949496;box-sizing:border-box;border-radius:4px;"></div>
<div class="a" style="left:116.6px;top:630.05px;width:4.4px;height:4.4px;border-radius:50%;background:#1b1b1d"></div>
<div class="a" style="left:116.6px;top:637.05px;width:4.4px;height:4.4px;border-radius:50%;background:#1b1b1d"></div>
<div class="a" style="left:116.6px;top:644.05px;width:4.4px;height:4.4px;border-radius:50%;background:#1b1b1d"></div>
<div class="a" style="left:164.4px;top:622.25px;width:78px;height:29.5px;border:1.5px solid #8b8b90;box-sizing:border-box;border-radius:5px;"></div>
<div class="a" style="left:175px;top:630.75px;width:12px;height:12px;background:#85858b;"></div>
<div class="a" style="left:195px;top:636.55px;width:7px;height:1.4px;background:#2b2b2d;"></div>
<svg class="a" style="left:212px;top:627.25px;" width="20" height="20" viewBox="0 0 24 24" fill="none" stroke="#212226" stroke-width="2" stroke-linecap="round" stroke-linejoin="round"><path d="m6 9 6 6 6-6"/></svg>
<span class="a t" id="t91" style="top:627.93px;font-size:18.8px;line-height:18.8px;color:#212226;letter-spacing:-0.632px;left:321.78px;">FISK-002 - Fiskars kastuvas</span>
<span class="a t" id="t92" style="top:628.61px;font-size:18px;line-height:18px;color:#212226;letter-spacing:-0.510px;left:603.63px;">VNT</span>
<span class="a t" id="t93" style="top:628.44px;font-size:18.2px;line-height:18.2px;color:#212226;letter-spacing:-1.067px;left:1181.82px;">21% (PVM1)</span>
<span class="a t" id="t94" style="top:627.93px;font-size:18.8px;line-height:18.8px;color:#212226;letter-spacing:0.123px;right:777.54px;">100.00</span>
<span class="a t" id="t95" style="top:627.93px;font-size:18.8px;line-height:18.8px;color:#212226;letter-spacing:0.267px;right:664.70px;">21.00</span>
<span class="a t" id="t96" style="top:627.93px;font-size:18.8px;line-height:18.8px;color:#212226;letter-spacing:0.123px;right:552.14px;">121.00</span>
<span class="a t" id="t97" style="top:627.93px;font-size:18.8px;line-height:18.8px;color:#212226;letter-spacing:0.142px;right:395.82px;">22.95</span>
<span class="a t" id="t98" style="top:627.93px;font-size:18.8px;line-height:18.8px;color:#212226;letter-spacing:-0.197px;left:1815.18px;">Kauno parduotuvė</span>
<svg class="a" style="left:31px;top:679px;" width="11" height="13" viewBox="0 0 10 13" fill="#6a6a6a" stroke="none" stroke-width="0" stroke-linecap="round" stroke-linejoin="round"><path d="M10 0v13L0 6.5z"/></svg>
<div class="a" style="left:49px;top:679px;width:1999px;height:11px;background:#616161;border-radius:6px;"></div>
<svg class="a" style="left:2124px;top:679px;" width="11" height="13" viewBox="0 0 10 13" fill="#6a6a6a" stroke="none" stroke-width="0" stroke-linecap="round" stroke-linejoin="round"><path d="M0 0v13l10-6.5z"/></svg>
<div class="a" style="left:27px;top:694px;width:2111px;height:1px;background:#a4a4a6;"></div>
<span class="a t" id="t99" style="top:714.95px;font-size:15.3px;line-height:15.3px;color:#2a2a2c;letter-spacing:-0.010px;left:45.71px;">4 įrašų duomenys šiame puslapyje</span>
<div class="a" style="left:1942px;top:700.5px;width:186px;height:43.5px;background:#b3b3b3;border:1px solid #a2a2a4;box-sizing:border-box;border-radius:7px;"></div>
<div class="a" style="left:1943px;top:701.5px;width:52px;height:41.5px;background:#adadb0;border-radius:6px;border-top-right-radius:0;border-bottom-right-radius:0;"></div>
<div class="a" style="left:2066px;top:701px;width:1px;height:42px;background:#a2a2a4;"></div>
<div class="a" style="left:2095px;top:701px;width:1px;height:42px;background:#a2a2a4;"></div>
<span class="a t" id="t100" style="top:717.36px;font-size:12.8px;line-height:12.8px;color:#2a2a2c;letter-spacing:-0.015px;left:1955.17px;">SUM</span>
<span class="a t" id="t101" style="top:713.66px;font-size:18px;line-height:18px;color:#212226;font-weight:700;letter-spacing:-0.813px;left:2007.43px;">Kiekis</span>
<span class="a t" id="t102" style="top:712.98px;font-size:18.8px;line-height:18.8px;color:#2b6b58;font-weight:700;left:2076.38px;">4</span>
<svg class="a" style="left:2104.5px;top:715px;" width="14.5" height="14.5" viewBox="0 0 24 24" fill="none" stroke="#212226" stroke-width="2.7" stroke-linecap="round" stroke-linejoin="round"><path d="M3 3l18 18M21 3 3 21"/></svg>
<div class="a" style="left:27px;top:749px;width:2111px;height:1px;background:#a4a4a6;"></div>
<svg class="a" style="left:45.5px;top:769px;" width="19.5" height="19.5" viewBox="0 0 24 24" fill="none" stroke="#212226" stroke-width="2" stroke-linecap="round" stroke-linejoin="round"><circle cx="12" cy="12" r="10"/><path d="M8 12h8"/><path d="M12 8v8"/></svg>
<span class="a t" id="t103" style="top:769.78px;font-size:18.8px;line-height:18.8px;color:#212226;letter-spacing:-0.161px;left:72.18px;">Pridėti eilutę</span>
<svg class="a" style="left:206.5px;top:769px;" width="19.5" height="19.5" viewBox="0 0 24 24" fill="none" stroke="#212226" stroke-width="2" stroke-linecap="round" stroke-linejoin="round"><circle cx="12" cy="12" r="10"/><path d="M8 12h8"/><path d="M12 8v8"/></svg>
<span class="a t" id="t104" style="top:769.78px;font-size:18.8px;line-height:18.8px;color:#212226;letter-spacing:-0.002px;left:233.58px;">Pridėti pastabą</span>
<svg class="a" style="left:391.3px;top:769px;" width="19.5" height="19.5" viewBox="0 0 24 24" fill="none" stroke="#212226" stroke-width="2" stroke-linecap="round" stroke-linejoin="round"><circle cx="12" cy="12" r="10"/><path d="M8 12h8"/><path d="M12 8v8"/></svg>
<span class="a t" id="t105" style="top:769.78px;font-size:18.8px;line-height:18.8px;color:#212226;letter-spacing:-0.245px;left:418.08px;">Pridėti iš likučių</span>
<svg class="a" style="left:576.1px;top:769px;" width="19.5" height="19.5" viewBox="0 0 24 24" fill="none" stroke="#212226" stroke-width="2" stroke-linecap="round" stroke-linejoin="round"><circle cx="12" cy="12" r="10"/><path d="M8 12h8"/><path d="M12 8v8"/></svg>
<span class="a t" id="t106" style="top:769.78px;font-size:18.8px;line-height:18.8px;color:#212226;letter-spacing:-0.540px;left:602.68px;">Pridėti iš užsakymų</span>
<span class="a t" id="t107" style="top:821.66px;font-size:18px;line-height:18px;color:#606062;letter-spacing:0.287px;left:45.33px;">Rodoma</span>
<div class="a" style="left:122px;top:813.3px;width:48.6px;height:34.2px;background:#a9a9a9;border-radius:7px;"></div>
<span class="a t" id="t108" style="top:821.66px;font-size:18px;line-height:18px;color:#212226;font-weight:700;letter-spacing:-0.263px;left:128.33px;">1 - 4</span>
<span class="a t" id="t109" style="top:821.66px;font-size:18px;line-height:18px;color:#606062;letter-spacing:-0.042px;left:177.73px;">iš 4 eilučių</span>
<svg class="a" style="left:1841px;top:822px;" width="14" height="16" viewBox="0 0 16 16" fill="none" stroke="#9c9c9e" stroke-width="2.3" stroke-linecap="round" stroke-linejoin="round"><path d="M10 2 4 8l6 6"/></svg>
<span class="a t" id="t110" style="top:823.20px;font-size:15px;line-height:15px;color:#9c9c9e;font-weight:700;letter-spacing:-0.449px;left:1858.03px;">ANKSTESNIS</span>
<div class="a" style="left:1963px;top:811.3px;width:36.5px;height:37.3px;border:1px solid #8e8e90;box-sizing:border-box;border-radius:7px;"></div>
<span class="a t" id="t111" style="top:821.66px;font-size:18px;line-height:18px;color:#212226;left:1976.83px;">1</span>
<span class="a t" id="t112" style="top:822.51px;font-size:17px;line-height:17px;color:#303032;font-weight:700;left:2007.60px;letter-spacing:-0.5px;">iš</span>
<span class="a t" id="t113" style="top:821.66px;font-size:18px;line-height:18px;color:#212226;font-weight:700;left:2026.83px;">1</span>
<span class="a t" id="t114" style="top:823.20px;font-size:15px;line-height:15px;color:#9c9c9e;font-weight:700;letter-spacing:-0.560px;left:2045.03px;">KITAS</span>
<svg class="a" style="left:2088px;top:822px;" width="14" height="16" viewBox="0 0 16 16" fill="none" stroke="#9c9c9e" stroke-width="2.3" stroke-linecap="round" stroke-linejoin="round"><path d="m6 2 6 6-6 6"/></svg>
<div class="a" style="left:27px;top:1088px;width:2111px;height:1px;background:#a4a4a6;"></div>
<div class="a" style="left:44.5px;top:1109.2px;width:1534px;height:62px;background:#b3b3b3;border:1px solid #9c9c9e;box-sizing:border-box;border-radius:8px;box-shadow:0 1px 2px rgba(0,0,0,0.06);"></div>
<span class="a t" id="t115" style="top:1132.41px;font-size:18.3px;line-height:18.3px;color:#58585a;letter-spacing:-0.174px;left:69.01px;">Pastabos</span>
<div class="a" style="left:1586.3px;top:1109.2px;width:542.2px;height:61.3px;background:#9fa9a6;border-radius:7px;"></div>
<div class="a" style="left:1721.5px;top:1109.2px;width:1px;height:61.299999999999955px;background:#8e9895;"></div>
<div class="a" style="left:1828.3px;top:1109.2px;width:1px;height:61.299999999999955px;background:#8e9895;"></div>
<div class="a" style="left:1956.8px;top:1109.2px;width:1px;height:61.299999999999955px;background:#8e9895;"></div>
<span class="a t" id="t116" style="top:1119.92px;font-size:15.8px;line-height:15.8px;color:#1f1f21;letter-spacing:-0.682px;left:1606.97px;">SUMA BE PVM</span>
<span class="a t" id="t117" style="top:1142.71px;font-size:20.3px;line-height:20.3px;color:#0f0f11;font-weight:700;letter-spacing:-0.528px;left:1613.68px;">318.35 ZŁ</span>
<span class="a t" id="t118" style="top:1119.92px;font-size:15.8px;line-height:15.8px;color:#1f1f21;letter-spacing:-0.718px;left:1735.47px;">PVM SUMA</span>
<span class="a t" id="t119" style="top:1142.71px;font-size:20.3px;line-height:20.3px;color:#0f0f11;font-weight:700;letter-spacing:0.152px;left:1734.28px;">64.65 ZŁ</span>
<span class="a t" id="t120" style="top:1119.92px;font-size:15.8px;line-height:15.8px;color:#1f1f21;letter-spacing:-0.630px;left:1840.77px;">SUMA SU PVM</span>
<span class="a t" id="t121" style="top:1142.71px;font-size:20.3px;line-height:20.3px;color:#0f0f11;font-weight:700;letter-spacing:0.197px;left:1845.28px;">383.00 ZŁ</span>
<span class="a t" id="t122" style="top:1119.92px;font-size:15.8px;line-height:15.8px;color:#1f1f21;letter-spacing:-0.538px;left:1968.97px;">SUMA MOKĖTI</span>
<span class="a t" id="t123" style="top:1142.71px;font-size:20.3px;line-height:20.3px;color:#0f0f11;font-weight:700;letter-spacing:0.285px;left:1973.68px;">383.00 ZŁ</span>
<svg class="a" style="left:2094px;top:1131px;" width="17" height="17" viewBox="0 0 24 24" fill="none" stroke="#7b8582" stroke-width="2" stroke-linecap="round" stroke-linejoin="round"><path d="M3 5h18M3 12h18M3 19h18"/></svg>
<div class="a" style="left:1349px;top:200px;width:186px;height:85px;border:5px solid #ed1c24;box-sizing:border-box;"></div>
<div class="a" style="left:645px;top:378px;width:500px;height:475px;background:#fff;border-radius:10px;box-shadow:0 8px 22px rgba(0,0,0,0.13),0 2px 6px rgba(0,0,0,0.05)"></div>
<span class="a t" id="t124" style="top:400.67px;font-size:23.3px;line-height:23.3px;color:#2b2b2d;letter-spacing:-0.109px;left:665.19px;-webkit-text-stroke:0.8px #2b2b2d;">Keisti valiutą/kursą</span>
<svg class="a" style="left:1101px;top:404px;" width="18" height="18" viewBox="0 0 24 24" fill="none" stroke="#3a3a3c" stroke-width="2.2" stroke-linecap="round" stroke-linejoin="round"><path d="M3 3l18 18M21 3 3 21"/></svg>
<div class="a" style="left:665px;top:443px;width:460px;height:1px;background:#e4e4e4;"></div>
<div class="a" style="left:673.5px;top:469.2px;width:443.7px;height:62px;background:#fff;border:1px solid #e3e3e3;box-sizing:border-box;border-radius:9px;box-shadow:0 2px 4px rgba(0,0,0,0.05);"></div>
<span class="a t" id="t125" style="top:480.69px;font-size:13px;line-height:13px;color:#666668;letter-spacing:0.339px;left:698.15px;">Valiuta</span>
<span class="a t" id="t126" style="top:501.24px;font-size:18.5px;line-height:18.5px;color:#333335;letter-spacing:-0.297px;left:700.50px;">PLN - Lenkijos zlotas</span>
<svg class="a" style="left:1080px;top:490px;" width="18" height="18" viewBox="0 0 24 24" fill="none" stroke="#333335" stroke-width="2.4" stroke-linecap="round" stroke-linejoin="round"><path d="m6 9 6 6 6-6"/></svg>
<div class="a" style="left:673.8px;top:547.6px;width:443.4px;height:60.4px;background:#fff;border:1px solid #e3e3e3;box-sizing:border-box;border-radius:9px;box-shadow:0 2px 4px rgba(0,0,0,0.05);"></div>
<span class="a t" id="t127" style="top:559.19px;font-size:13px;line-height:13px;color:#666668;letter-spacing:-0.308px;left:698.15px;">Kursas</span>
<span class="a t" id="t128" style="top:577.24px;font-size:18.5px;line-height:18.5px;color:#333335;letter-spacing:-0.565px;left:697.80px;">4.358</span>
<div class="a" style="left:1059.2px;top:553px;width:49.5px;height:49.6px;background:#ececec;border-radius:9px;"></div>
<svg class="a" style="left:1073px;top:565px;" width="22" height="22" viewBox="0 0 24 24" fill="none" stroke="#333335" stroke-width="1.9" stroke-linecap="round" stroke-linejoin="round"><path d="M3 12a9 9 0 0 1 9-9 9.75 9.75 0 0 1 6.74 2.74L21 8"/><path d="M21 3v5h-5"/><path d="M21 12a9 9 0 0 1-9 9 9.75 9.75 0 0 1-6.74-2.74L3 16"/><path d="M8 16H3v5"/></svg>
<div class="a" style="left:673.6px;top:627.4px;width:19.2px;height:19.2px;background:#fff;border:1px solid #c9c9cb;box-sizing:border-box;border-radius:4px;"></div>
<span class="a t" id="t129" style="top:627.41px;font-size:19px;line-height:19px;color:#333335;letter-spacing:-0.406px;left:700.76px;">Perskaičiuoti kainas ir nuolaidas</span>
<div class="a" style="left:665px;top:675px;width:460px;height:1px;background:#e6e6e6;"></div>
<span class="a t" id="t130" style="top:690.27px;font-size:22px;line-height:22px;color:#e3202a;left:668.07px;">*</span>
<span class="a t" id="t131" style="top:689.98px;font-size:18.8px;line-height:18.8px;color:#333335;letter-spacing:-0.508px;left:681.78px;">Pakeitus kursą bus perskaičiuotos bazinės sumos</span>
<div class="a" style="left:665px;top:721px;width:460px;height:1px;background:#e6e6e6;"></div>
<span class="a t" id="t132" style="top:783.31px;font-size:19px;line-height:19px;color:#1b1b1d;letter-spacing:-0.215px;left:861.06px;">Atšaukti</span>
<div class="a" style="left:967px;top:767.2px;width:150.7px;height:49.7px;background:#3bb077;border-radius:8px;"></div>
<svg class="a" style="left:990px;top:782px;" width="20" height="20" viewBox="990 782 20 20" fill="none" stroke="#fff" stroke-width="1.5" stroke-linecap="round" stroke-linejoin="round"><rect x="997.3" y="784.8" width="10.5" height="10.8" rx="2.2"/><path d="M997.3 788.3h-2.4a2.2 2.2 0 0 0-2.2 2.2v7.1a2.2 2.2 0 0 0 2.2 2.2h6.9a2.2 2.2 0 0 0 2.2-2.2v-1.9"/></svg>
<span class="a t" id="t133" style="top:783.31px;font-size:19px;line-height:19px;color:#ffffff;letter-spacing:-0.345px;left:1020.06px;">Išsaugoti</span>
<div class="a" style="left:620px;top:365px;width:558px;height:509px;border:5px solid #ed1c24;box-sizing:border-box;"></div>
</body></html>
